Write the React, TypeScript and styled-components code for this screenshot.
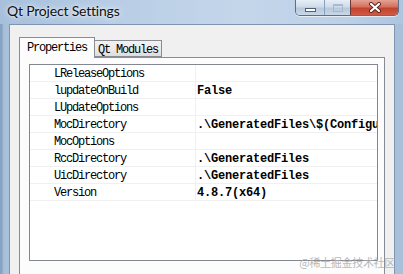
import React from "react";
import styled, { createGlobalStyle } from "styled-components";

const Global = createGlobalStyle`
  html, body { margin: 0; padding: 0; }
  body { width: 403px; height: 274px; overflow: hidden; background: #f0f0f0; }
  * { box-sizing: border-box; }
`;

const Window = styled.div`
  position: relative;
  width: 403px;
  height: 274px;
  display: flex;
  flex-direction: column;
  overflow: hidden;
  background: #a7bfda;
`;

const TitleBar = styled.div`
  height: 24px;
  flex: none;
  display: flex;
  align-items: flex-start;
  padding-left: 7px;
  padding-right: 4px;
  background: linear-gradient(90deg, #a6bfdb 0%, #b9cee6 30%, #c4d6ea 60%, #bdd0e6 85%, #aec5df 100%);
`;

const Title = styled.div`
  margin-top: 1px;
  font-family: Lato, "Liberation Sans", sans-serif;
  font-size: 14px;
  letter-spacing: -0.2px;
  line-height: 20px;
  color: #111;
  text-shadow: 0 0 8px rgba(255, 255, 255, 0.9), 0 0 3px rgba(255, 255, 255, 0.8);
`;

const Controls = styled.div`
  margin-left: auto;
  display: flex;
  height: 16px;
  border: 1px solid #5a6f8c;
  border-top: none;
  border-radius: 0 0 5px 5px;
  overflow: hidden;
  box-shadow: 0 1px 0 rgba(255, 255, 255, 0.6);
`;

const CtlButton = styled.div<{ $w: number; $close?: boolean }>`
  width: ${(p) => p.$w}px;
  height: 100%;
  display: flex;
  align-items: center;
  justify-content: center;
  border-left: ${(p) => (p.$close ? "1px solid #6b3a36" : "1px solid #8aa0bc")};
  background: ${(p) =>
    p.$close
      ? "linear-gradient(180deg, #e3a393 0%, #d5705d 45%, #c2432c 55%, #cf5a44 100%)"
      : "linear-gradient(180deg, #e6eef7 0%, #cfdcea 45%, #b8c9dd 55%, #c9d7e8 100%)"};
  &:first-child { border-left: none; }
`;

const MinGlyph = styled.div`
  width: 11px;
  height: 4px;
  margin-top: 5px;
  background: #fff;
  border: 1px solid #4f5f78;
`;

const MaxGlyph = styled.div`
  width: 10px;
  height: 8px;
  border: 1px solid #9fb0c6;
  border-top-width: 2px;
  background: transparent;
  opacity: 0.8;
`;

const Body = styled.div`
  flex: 1;
  display: flex;
  padding: 0 8px 0 7px;
  border-left: 2px solid #86a3c4;
  background: linear-gradient(90deg, #8ea9c8 0px, #a9c0da 2px, #a9c0da 100%);
`;

const Client = styled.div`
  flex: 1;
  display: flex;
  background: #f0f0f0;
  border: 1px solid #7f95b2;
  border-bottom: none;
  padding: 12px 9px 0 9px;
`;

const TabWidget = styled.div`
  flex: 1;
  display: flex;
  flex-direction: column;
`;

const TabBar = styled.div`
  height: 20px;
  display: flex;
  align-items: flex-end;
`;

const Tab = styled.div<{ $active?: boolean }>`
  position: relative;
  z-index: ${(p) => (p.$active ? 1 : 0)};
  height: ${(p) => (p.$active ? 21 : 17)}px;
  margin-bottom: ${(p) => (p.$active ? -1 : 0)}px;
  width: ${(p) => (p.$active ? 76 : 67)}px;
  padding-left: ${(p) => (p.$active ? 7 : 3)}px;
  padding-top: ${(p) => (p.$active ? 3 : 2)}px;
  border: 1px solid #898c95;
  border-bottom: ${(p) => (p.$active ? "none" : "1px solid #898c95")};
  border-left: ${(p) => (p.$active ? "1px solid #898c95" : "none")};
  background: ${(p) =>
    p.$active ? "#fcfcfc" : "linear-gradient(180deg, #f2f2f2 0%, #ebebeb 50%, #dddddd 100%)"};
  font-family: "Liberation Mono", "DejaVu Sans Mono", monospace;
  font-size: 12px;
  letter-spacing: -1.2px;
  line-height: 14px;
  color: #000;
  white-space: nowrap;
`;

const Pane = styled.div`
  flex: 1;
  display: flex;
  align-items: flex-start;
  border: 1px solid #898c95;
  border-bottom: none;
  background: #fcfcfc;
  padding: 6px 6px 0 9px;
`;

const Grid = styled.div`
  flex: 1;
  height: 197px;
  border: 1px solid #828790;
  background: #fff;
  display: flex;
  flex-direction: column;
  overflow: hidden;
`;

const Row = styled.div`
  height: 17px;
  flex: none;
  display: grid;
  grid-template-columns: 24px 142px 1fr;
  border-bottom: 1px solid #f0f0f0;
`;

const Gutter = styled.div``;

const Name = styled.div`
  border-right: 1px solid #f0f0f0;
  padding-top: 2px;
  font-family: "Liberation Mono", "DejaVu Sans Mono", monospace;
  font-size: 12px;
  letter-spacing: -1.2px;
  line-height: 14px;
  color: #000;
  white-space: nowrap;
  overflow: hidden;
`;

const Value = styled.div`
  padding-left: 1px;
  padding-top: 2px;
  font-family: "Liberation Mono", "DejaVu Sans Mono", monospace;
  font-size: 12px;
  font-weight: bold;
  letter-spacing: -0.2px;
  line-height: 14px;
  color: #000;
  white-space: nowrap;
  overflow: hidden;
`;

const Watermark = styled.div`
  position: absolute;
  right: 8px;
  bottom: 5px;
  font-family: "Noto Sans CJK SC", "Noto Sans", sans-serif;
  font-size: 11px;
  line-height: 14px;
  color: rgba(170, 170, 170, 0.85);
  letter-spacing: -0.3px;
`;

const CloseIcon = () => (
  <svg width="14" height="11" viewBox="0 0 14 11">
    <path d="M3 2 L11 9 M11 2 L3 9" stroke="#5a2520" strokeWidth="4" strokeLinecap="round" />
    <path d="M3 2 L11 9 M11 2 L3 9" stroke="#fff" strokeWidth="2.2" strokeLinecap="round" />
  </svg>
);

const props: [string, string][] = [
  ["LReleaseOptions", ""],
  ["lupdateOnBuild", "False"],
  ["LUpdateOptions", ""],
  ["MocDirectory", ".\\GeneratedFiles\\$(ConfigurationName)"],
  ["MocOptions", ""],
  ["RccDirectory", ".\\GeneratedFiles"],
  ["UicDirectory", ".\\GeneratedFiles"],
  ["Version", "4.8.7(x64)"],
];

export default function App() {
  return (
    <>
      <Global />
      <Window>
        <TitleBar>
          <Title>Qt Project Settings</Title>
          <Controls>
            <CtlButton $w={28}>
              <MinGlyph />
            </CtlButton>
            <CtlButton $w={26}>
              <MaxGlyph />
            </CtlButton>
            <CtlButton $w={48} $close>
              <CloseIcon />
            </CtlButton>
          </Controls>
        </TitleBar>
        <Body>
          <Client>
            <TabWidget>
              <TabBar>
                <Tab $active>Properties</Tab>
                <Tab>Qt Modules</Tab>
              </TabBar>
              <Pane>
                <Grid>
                  {props.map(([n, v]) => (
                    <Row key={n}>
                      <Gutter />
                      <Name>{n}</Name>
                      <Value>{v}</Value>
                    </Row>
                  ))}
                </Grid>
              </Pane>
            </TabWidget>
          </Client>
        </Body>
        <Watermark>@稀土掘金技术社区</Watermark>
      </Window>
    </>
  );
}
